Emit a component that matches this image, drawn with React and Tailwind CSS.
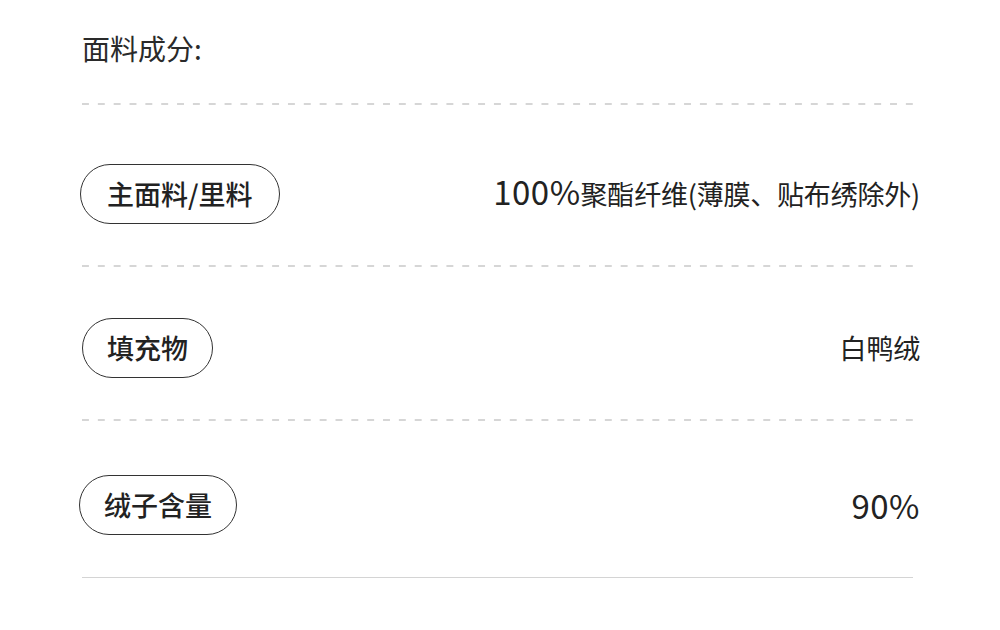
import React from 'react';

const font = { fontFamily: '"Noto Sans CJK SC", "Noto Sans", sans-serif' };

// 成分の行データ
const rows = [
  { label: '主面料/里料', value: '100%聚酯纤维(薄膜、贴布绣除外)', pad: 'pt-[59px] pb-[41px]', pill: 'px-[26px] -ml-[2px]' },
  { label: '填充物', value: '白鸭绒', pad: 'pt-[51px] pb-[41px]', pill: 'px-[24px]' },
  { label: '绒子含量', value: '90%', pad: 'pt-[54px] pb-[42px]', pill: 'px-[24px] -ml-[3px]' },
];

// 数字だけ大きめで表示
const Value = ({ text }) =>
  text.split(/([0-9%]+)/).filter(Boolean).map((part, i) =>
    /^[0-9%]+$/.test(part) ? (
      <span key={i} className="text-[33px] font-normal tracking-[0.5px] leading-none">{part}</span>
    ) : (
      <span key={i}>{part}</span>
    )
  );

const Dashed = () => (
  <div className="h-[2px] w-full bg-[linear-gradient(to_right,#d6d6d6_7px,transparent_7px)] bg-[length:15.85px_2px]" />
);

const App = () => {
  return (
    <div className="w-[1000px] h-[630px] bg-white text-[#222]" style={font}>
      <div className="ml-[82px] w-[831px]">
        <div className="pt-[30px] pb-[37px] text-[28px] leading-[36px] text-[#2a2a2a]">面料成分:</div>
        {rows.map((row, i) => (
          <React.Fragment key={row.label}>
            {i === 0 && <Dashed />}
            <div className={`flex items-center justify-between ${row.pad}`}>
              <div className={`h-[60px] flex items-center rounded-full border border-[#333] text-[27px] font-medium ${row.pill}`}>
                {row.label}
              </div>
              <div className="-mr-[7px] flex items-baseline text-[27px] font-normal tracking-[-0.2px]">
                <Value text={row.value} />
              </div>
            </div>
            {i < rows.length - 1 ? <Dashed /> : <div className="h-px w-full bg-[#d4d4d4]" />}
          </React.Fragment>
        ))}
      </div>
    </div>
  );
};

export default App;
